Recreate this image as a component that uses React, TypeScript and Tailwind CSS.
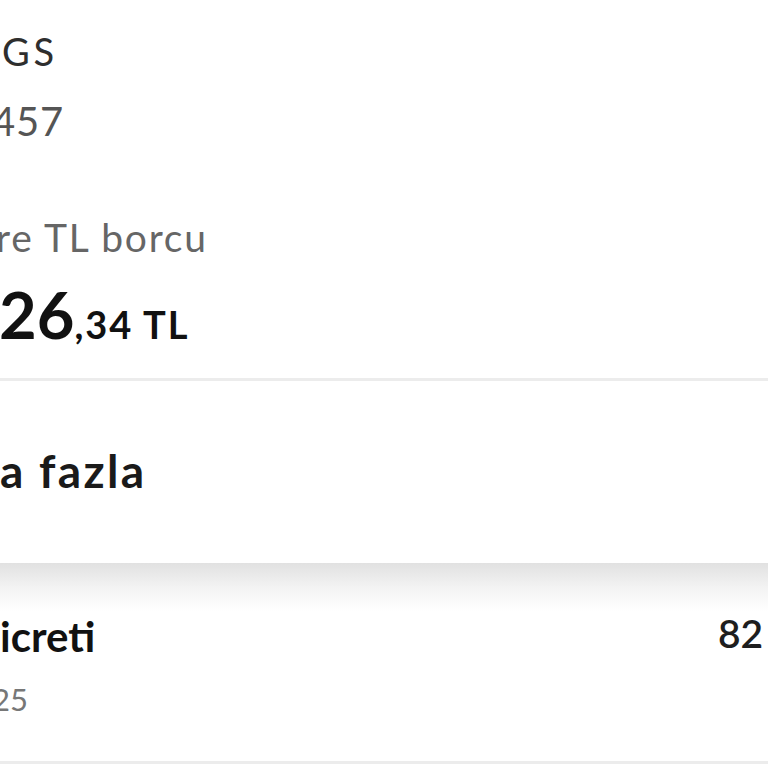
const font = { fontFamily: "Lato, 'Noto Sans', sans-serif" };

export default function App() {
  return (
    <div className="w-[768px] h-[768px] overflow-hidden bg-white" style={font}>
      <section className="pt-[32px]">
        <p className="text-[38px] leading-none tracking-[0.1em] text-[#2e2e2e] ml-[2px]">GS</p>
        <p className="mt-[31px] text-[40px] leading-none tracking-[0.02em] text-[#555555] -ml-[8px]">457</p>
        <p className="mt-[77px] text-[39px] leading-none tracking-[0.045em] text-[#666666] -ml-[4px] whitespace-nowrap">
          re TL borcu
        </p>
        <div className="mt-[25px] flex items-baseline leading-none text-[#111111] whitespace-nowrap">
          <span className="text-[65px] font-bold -ml-[1px]">26</span>
          <span className="text-[38px] font-bold tracking-[0.05em]">,34 TL</span>
        </div>
        <div className="mt-[31px] h-[3px] bg-[#ececec]" />
      </section>

      <section className="pt-[67px] pb-[69px]">
        <p className="text-[46px] font-bold leading-none tracking-[0.05em] text-[#1a1a1a] whitespace-nowrap">a fazla</p>
      </section>

      <section className="bg-[linear-gradient(to_bottom,#e1e1e1,#f4f4f4_26px,#ffffff_48px)] pt-[52px]">
        <div className="flex items-start justify-between">
          <div>
            <p className="text-[42px] font-bold leading-none text-[#111111]">icreti</p>
            <p className="mt-[27px] text-[31px] leading-none text-[#777777] -ml-[8px]">25</p>
          </div>
          <span className="-mt-[1px] text-[39px] font-semibold leading-none text-[#1e1e1e] -mr-[4px] w-[54px] overflow-hidden whitespace-nowrap">
            82
          </span>
        </div>
        <div className="mt-[46px] h-[3px] bg-[#ececec]" />
      </section>
    </div>
  );
}
